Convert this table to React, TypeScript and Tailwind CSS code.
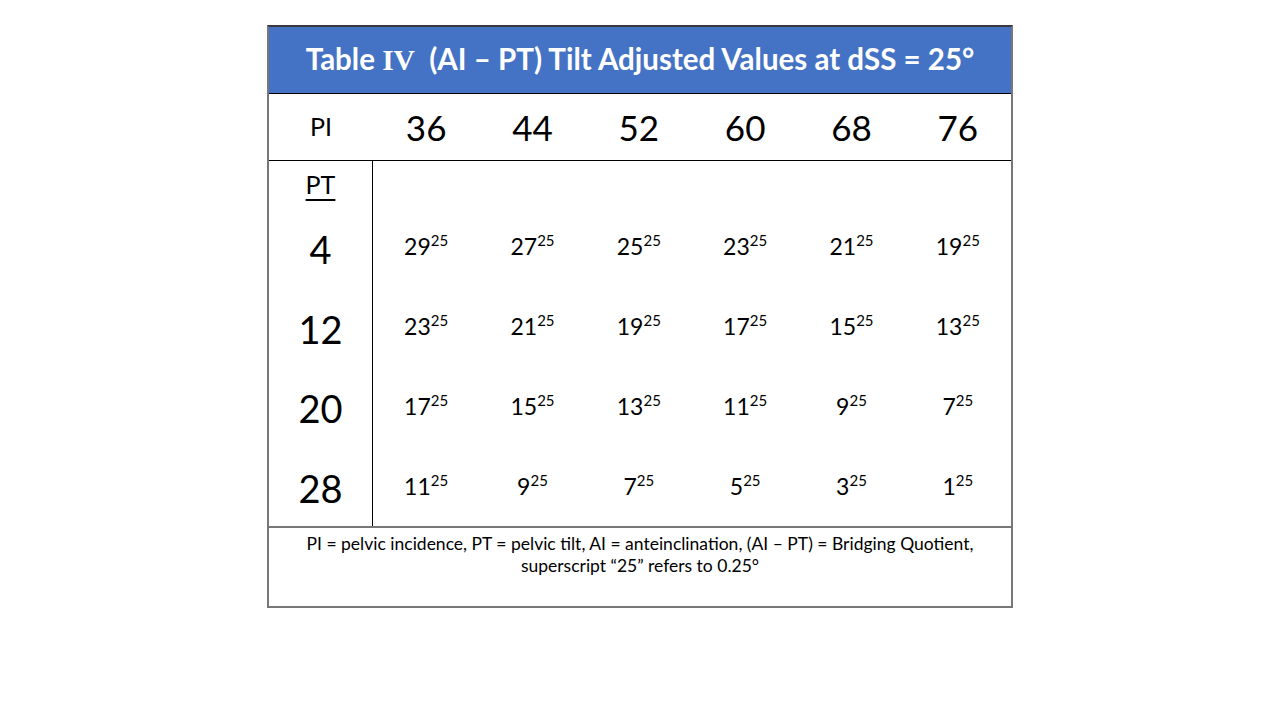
import React from "react";

const cols = ["36", "44", "52", "60", "68", "76"];
const rows: { pt: string; vals: string[] }[] = [
  { pt: "4", vals: ["29", "27", "25", "23", "21", "19"] },
  { pt: "12", vals: ["23", "21", "19", "17", "15", "13"] },
  { pt: "20", vals: ["17", "15", "13", "11", "9", "7"] },
  { pt: "28", vals: ["11", "9", "7", "5", "3", "1"] },
];

function Val({ v }: { v: string }) {
  return (
    <div className="flex items-center justify-center">
      <span className="text-[23px] leading-none">{v}</span>
      <span className="text-[15px] leading-none -translate-y-[6px]">25</span>
    </div>
  );
}

export default function App() {
  return (
    <div
      className="w-full h-[720px] bg-white pt-[25px] text-black"
      style={{ fontFamily: "Lato, 'Open Sans', sans-serif" }}
    >
      <div className="mx-auto w-[746px] border-2 border-[#777777] border-t-[#3a3a3a]">
        <div className="h-[67px] bg-[#4472C4] border-b border-black flex items-center justify-center">
          <div className="text-white font-bold text-[29.5px] leading-none whitespace-pre">
            Table{" "}
            <span style={{ fontFamily: "'Liberation Serif', serif" }}>IV</span>
            {"  (AI – PT) Tilt Adjusted Values at dSS = 25°"}
          </div>
        </div>
        <div className="h-[67px] border-b border-black flex items-center">
          <div className="w-[104px] flex justify-center text-[25px]">PI</div>
          <div className="flex-1 grid grid-cols-6">
            {cols.map((c) => (
              <div key={c} className="flex justify-center text-[35px]">
                {c}
              </div>
            ))}
          </div>
        </div>
        <div className="flex h-[365px]">
          <div className="w-[104px] border-r border-black flex flex-col">
            <div className="h-[46px] flex items-center justify-center pt-[2px]">
              <span className="text-[25px] leading-none underline underline-offset-[5px] decoration-[2px]">PT</span>
            </div>
            {rows.map((r) => (
              <div key={r.pt} className="h-[80px] flex items-center justify-center pt-[4px]">
                <span className="text-[38px] leading-none">{r.pt}</span>
              </div>
            ))}
          </div>
          <div className="flex-1 flex flex-col">
            <div className="h-[46px]" />
            {rows.map((r) => (
              <div key={r.pt} className="h-[80px] grid grid-cols-6 items-center">
                {r.vals.map((v, i) => (
                  <Val key={i} v={v} />
                ))}
              </div>
            ))}
          </div>
        </div>
        <div className="h-[80px] border-t-2 border-[#777777] pt-[5px] text-center text-[17.5px] leading-[22px]">
          <div>PI = pelvic incidence, PT = pelvic tilt, AI = anteinclination, (AI – PT) = Bridging Quotient,</div>
          <div>superscript “25” refers to 0.25°</div>
        </div>
      </div>
    </div>
  );
}
